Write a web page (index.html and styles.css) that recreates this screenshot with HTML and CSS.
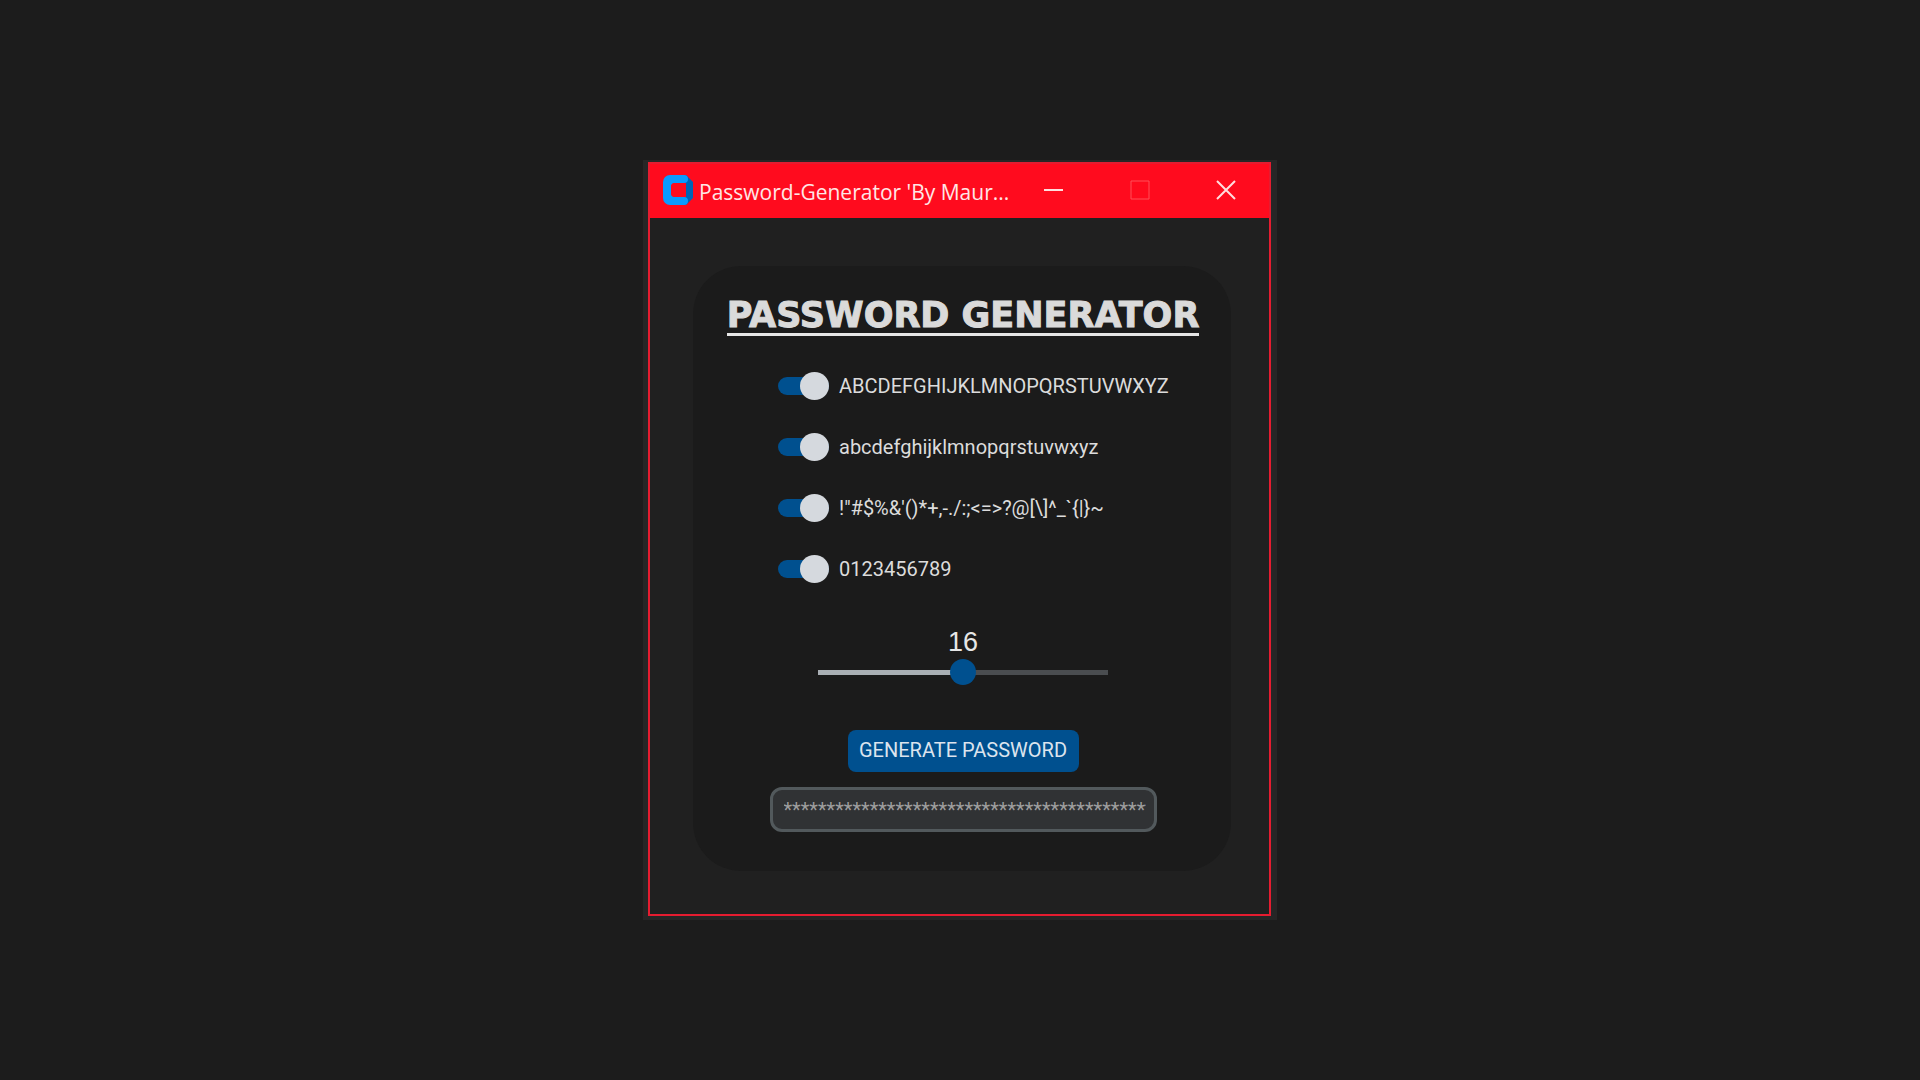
FILE: index.html
```
<!DOCTYPE html>
<html lang="en">
<head>
<meta charset="utf-8">
<title>Password-Generator</title>
<link rel="stylesheet" href="styles.css">
</head>
<body>
<main class="frame">
  <section class="window">
    <header class="titlebar">
      <svg class="logo" viewBox="0 0 30 30" aria-hidden="true">
        <path d="M20 0h3l7 7v16l-7 7h-3z" fill="#0064b5"/>
        <path d="M7 0h14a4 4 0 0 1 4 4a4 4 0 0 1-4 4H12a4 4 0 0 0-4 4v6a4 4 0 0 0 4 4h9a4 4 0 0 1 4 4a4 4 0 0 1-4 4H7a7 7 0 0 1-7-7V7a7 7 0 0 1 7-7z" fill="#0a9bff"/>
        <path d="M12 8h11v14H12a4 4 0 0 1-4-4v-6a4 4 0 0 1 4-4z" fill="#ff0b1e"/>
      </svg>
      <span class="caption">Password-Generator 'By Maur...</span>
      <div class="controls">
        <button class="control" type="button" aria-label="Minimize"><svg viewBox="0 0 20 20"><path d="M0 10h19" stroke-width="2"/></svg></button>
        <button class="control" type="button" aria-label="Maximize" disabled><svg viewBox="0 0 20 20"><path d="M1 1h18v18H1z"/></svg></button>
        <button class="control" type="button" aria-label="Close"><svg viewBox="0 0 20 20"><path d="M1 1l18 18M19 1L1 19" stroke-width="2"/></svg></button>
      </div>
    </header>
    <form class="card">
      <h1 class="heading">PASSWORD GENERATOR</h1>
      <div class="options">
        <label class="option"><input class="switch" type="checkbox" role="switch" checked>ABCDEFGHIJKLMNOPQRSTUVWXYZ</label>
        <label class="option"><input class="switch" type="checkbox" role="switch" checked>abcdefghijklmnopqrstuvwxyz</label>
        <label class="option"><input class="switch" type="checkbox" role="switch" checked>!"#$%&amp;'()*+,-./:;&lt;=&gt;?@[\]^_`{|}~</label>
        <label class="option"><input class="switch" type="checkbox" role="switch" checked>0123456789</label>
      </div>
      <label class="length" for="length">16</label>
      <input class="slider" id="length" type="range" min="0" max="32" value="16">
      <button class="generate" type="button">GENERATE PASSWORD</button>
      <input class="result" type="text" aria-label="Generated password" placeholder="**************************************************" readonly>
    </form>
  </section>
</main>
</body>
</html>
```
FILE: styles.css
```
* { box-sizing: border-box; }

body {
  margin: 0;
  min-height: 100vh;
  display: flex;
  align-items: center;
  justify-content: center;
  background: #1c1c1c;
  color: #dce4ee;
  font: 20px/24px Roboto, sans-serif;
}

.frame {
  width: 100%;
  max-width: 634px;
  padding: 2px 6px 4px 5px;
  background: #262626;
}

.window {
  border: 2px solid #e51c30;
  background: #202020;
}

.titlebar {
  display: flex;
  align-items: center;
  height: 54px;
  padding: 0 0 2px 13px;
  background: #ff0b1e;
}

.logo { width: 30px; height: 30px; flex: none; }

.caption {
  flex: 1;
  margin-left: 6px;
  padding-top: 3px;
  color: #ffe6e6;
  font: 21px/32px "Open Sans", "Noto Sans", sans-serif;
  white-space: nowrap;
}

.controls { display: flex; }

.control {
  display: flex;
  align-items: center;
  justify-content: center;
  width: 86px;
  height: 52px;
  padding: 0;
  border: 0;
  background: none;
}

.control svg {
  width: 20px;
  height: 20px;
  fill: none;
  stroke: #ffdede;
}

.control:disabled svg { stroke: #ff5058; }

.card {
  display: flex;
  flex-direction: column;
  align-items: center;
  margin: 48px 38px 43px 43px;
  padding: 32px 31px 39px 33px;
  border-radius: 48px;
  background: #1b1b1b;
}

.heading {
  margin: 0;
  border-bottom: 3px solid #e6e6e6;
  color: #dadada;
  font: bold 35px/35px "DejaVu Sans", sans-serif;
  -webkit-text-stroke: 1px #dadada;
  white-space: nowrap;
}

.options {
  display: flex;
  flex-direction: column;
  gap: 33px;
  width: 100%;
  margin-top: 36px;
  padding-left: 52px;
}

.option {
  display: flex;
  align-items: center;
  gap: 10px;
  height: 28px;
  color: #dcdcdc;
}

.switch {
  display: flex;
  align-items: center;
  justify-content: flex-end;
  flex: none;
  appearance: none;
  width: 51px;
  height: 18px;
  margin: 0;
  border-radius: 9px;
  background: #00508f;
}

.switch::before {
  content: "";
  flex: none;
  width: 29px;
  height: 28px;
  border-radius: 50%;
  background: #d5d9de;
}

.switch:not(:checked) { justify-content: flex-start; }

.length {
  margin-top: 43px;
  color: #e6e6e6;
  font: 27px/32px "Liberation Sans", Arial, sans-serif;
}

.slider {
  appearance: none;
  width: 290px;
  height: 26px;
  margin: 1px 0 0;
  background: linear-gradient(90deg, #aab0b5 50%, #4a4d50 50%) center / 100% 5px no-repeat;
}

.slider::-webkit-slider-thumb {
  appearance: none;
  width: 26px;
  height: 26px;
  border-radius: 50%;
  background: #00508f;
}

.generate {
  width: 231px;
  height: 42px;
  margin-top: 45px;
  padding: 0 0 2px;
  border: 0;
  border-radius: 8px;
  background: #00508f;
  color: #dce4ee;
  font: inherit;
  white-space: nowrap;
}

.result {
  width: 387px;
  height: 45px;
  margin-top: 15px;
  padding: 0 8px 0 11px;
  border: 3px solid #52595c;
  border-radius: 12px;
  background: #303234;
  color: #dce4ee;
  font: inherit;
}

.result::placeholder { color: #9e9e9e; opacity: 1; }
```
